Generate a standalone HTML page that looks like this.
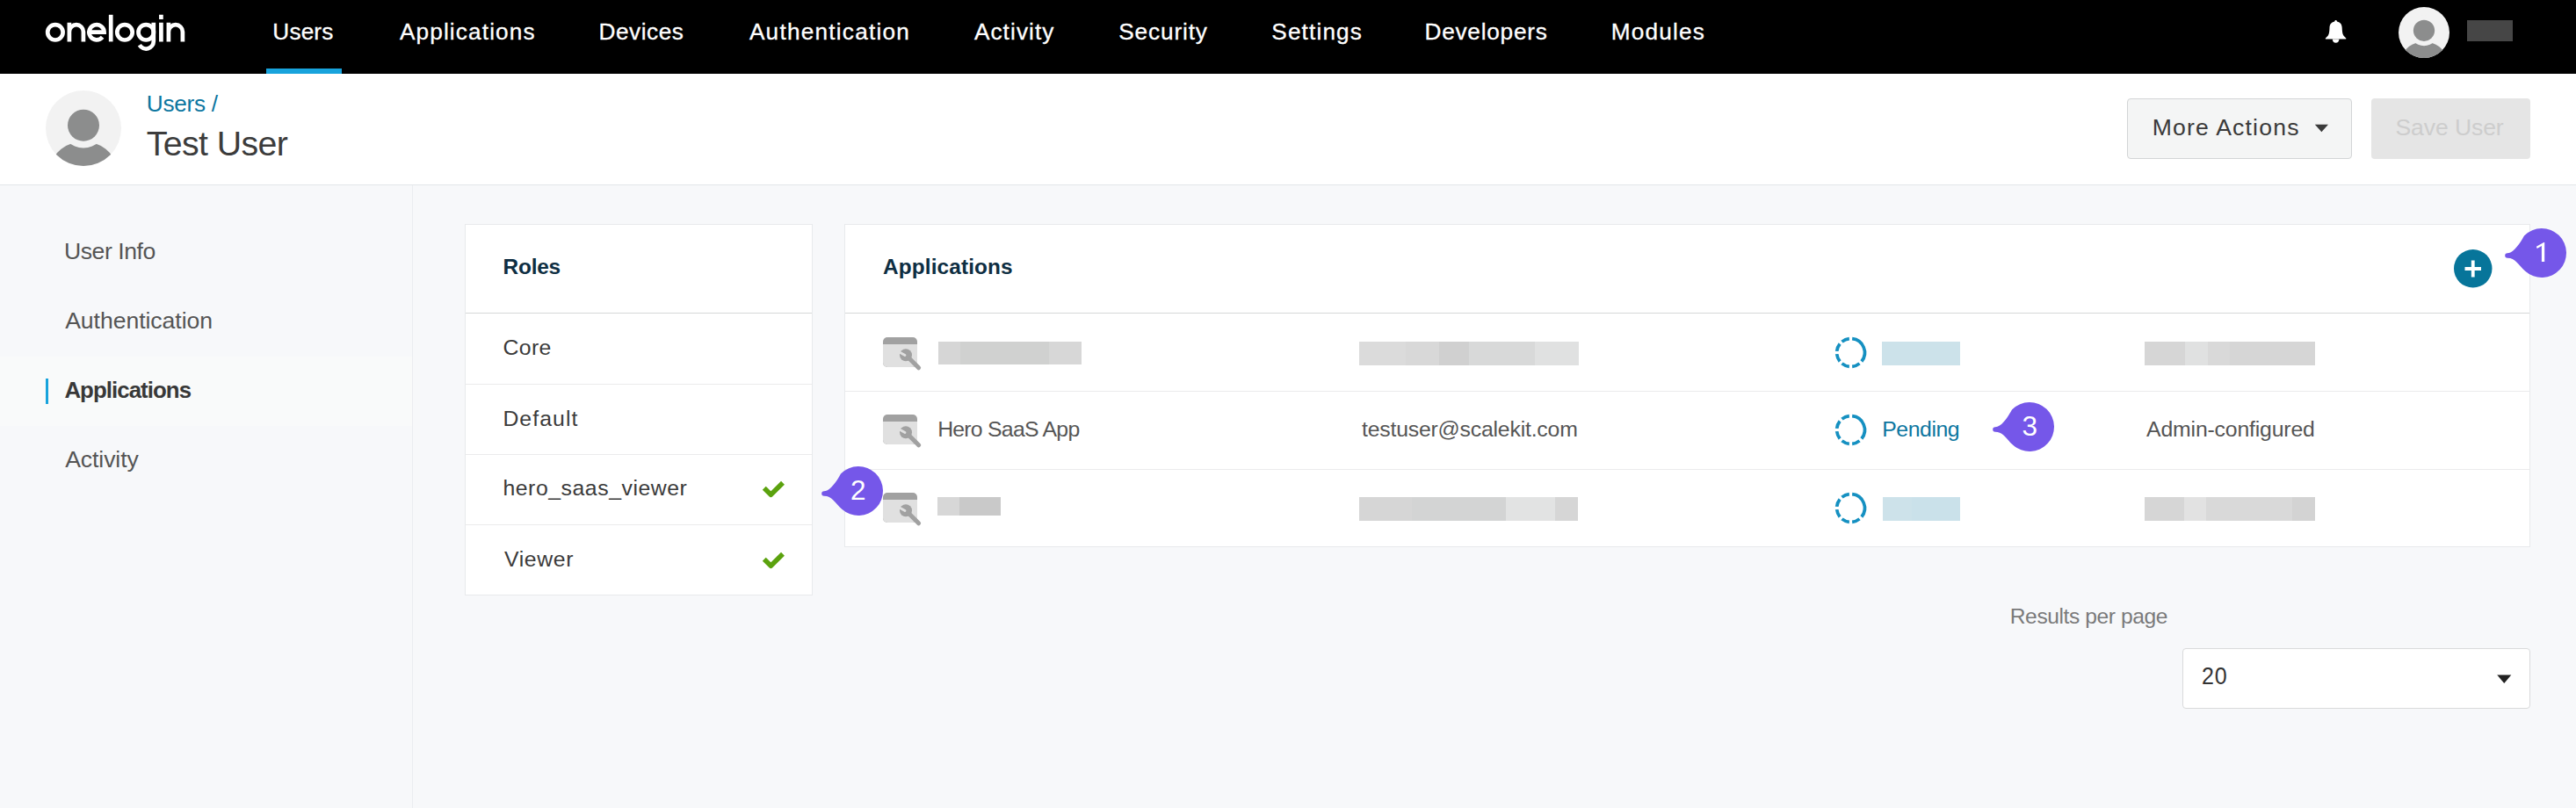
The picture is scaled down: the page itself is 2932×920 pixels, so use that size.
<!DOCTYPE html>
<html><head><meta charset="utf-8"><title>OneLogin - Test User</title>
<style>
html,body{margin:0;padding:0}
body{width:2932px;height:920px;position:relative;overflow:hidden;background:#f7f8fa;font-family:"Liberation Sans",sans-serif}
.a{position:absolute}
.t{position:absolute;line-height:0;white-space:nowrap}
.nav{-webkit-text-stroke:0.3px #fff}
</style></head>
<body>

<div class="a" id="topnav" style="left:0;top:0;width:2932px;height:84px;background:#000"></div>
<svg class="a" style="left:0;top:0" width="230" height="84" viewBox="0 0 230 84">
<g fill="none" stroke="#fff" stroke-width="4.7">
<circle cx="62.9" cy="36.8" r="8.7"/>
<path d="M78.9 47.4V25.8M78.9 36.2A8 8 0 0 1 94.9 36.2V47.4"/>
<path d="M101.4 36.7H118.6A8.6 8.6 0 1 0 116.6 42.3"/>
<path d="M126.2 16.8V47.4"/>
<circle cx="142" cy="36.8" r="8.7"/>
<circle cx="166.2" cy="36.8" r="8.7"/>
<path d="M174.8 25.8V47A8.6 8.6 0 0 1 158.8 51.3"/>
<path d="M183.4 25.8V47.4M183.4 16.8V21.9"/>
<path d="M191.9 47.4V25.8M191.9 36.2A8 8 0 0 1 207.9 36.2V47.4"/>
</g></svg>
<div class="t nav" id="nav1" style="left:310.32px;top:35.92px;font-size:26.20px;letter-spacing:0.160px;color:#fff">Users</div>
<div class="t nav" id="nav2" style="left:454.90px;top:35.92px;font-size:26.20px;letter-spacing:1.135px;color:#fff">Applications</div>
<div class="t nav" id="nav3" style="left:681.50px;top:35.92px;font-size:26.20px;letter-spacing:0.533px;color:#fff">Devices</div>
<div class="t nav" id="nav4" style="left:852.90px;top:35.92px;font-size:26.20px;letter-spacing:1.231px;color:#fff">Authentication</div>
<div class="t nav" id="nav5" style="left:1108.90px;top:35.92px;font-size:26.20px;letter-spacing:1.086px;color:#fff">Activity</div>
<div class="t nav" id="nav6" style="left:1273.30px;top:35.92px;font-size:26.20px;letter-spacing:0.857px;color:#fff">Security</div>
<div class="t nav" id="nav7" style="left:1447.30px;top:35.92px;font-size:26.20px;letter-spacing:1.143px;color:#fff">Settings</div>
<div class="t nav" id="nav8" style="left:1621.50px;top:35.92px;font-size:26.20px;letter-spacing:0.764px;color:#fff">Developers</div>
<div class="t nav" id="nav9" style="left:1833.76px;top:35.92px;font-size:26.20px;letter-spacing:1.173px;color:#fff">Modules</div>
<div class="a" style="left:303px;top:78px;width:86px;height:6px;background:#18a3dc"></div>
<svg class="a" style="left:2640px;top:18px" width="36" height="36" viewBox="0 0 36 36">
<path d="M18.6 5C19.5 5 19.9 5.7 20 6.4C24 7.2 25.6 10 25.7 13.6C25.8 17 26 20.5 27.4 22.6C28.2 23.9 29.4 24.6 30.2 25.4C30.6 25.8 30.4 26.6 29.6 26.6H7.6C6.8 26.6 6.6 25.8 7 25.4C7.8 24.6 9 23.9 9.8 22.6C11.2 20.5 11.4 17 11.5 13.6C11.6 10 13.2 7.2 17.2 6.4C17.3 5.7 17.7 5 18.6 5Z" fill="#fff"/>
<path d="M14.8 26.4C14.8 29 16.4 30.7 18.6 30.7C20.8 30.7 22.4 29 22.4 26.4Z" fill="#fff"/></svg>
<svg class="a" style="left:2730.0px;top:8.0px" width="58.0" height="58.0" viewBox="52 103.3 86 86"><defs><clipPath id="cp2759"><circle cx="95" cy="146.3" r="43"/></clipPath></defs><circle cx="95" cy="146.3" r="43" fill="#f2f2f2"/><g clip-path="url(#cp2759)"><ellipse cx="95" cy="189.7" rx="36" ry="27.9" fill="#8c8d8d"/><circle cx="95" cy="143" r="25.8" fill="#f2f2f2"/></g><circle cx="95" cy="143" r="18" fill="#8c8d8d"/></svg>
<div class="a" style="left:2808px;top:23px;width:52px;height:24px;background:#464646"></div>
<div class="a" style="left:0;top:84px;width:2932px;height:126px;background:#fff;border-bottom:1px solid #e3e6e9"></div>
<svg class="a" style="left:52.0px;top:103.3px" width="86.0" height="86.0" viewBox="52 103.3 86 86"><defs><clipPath id="cp95"><circle cx="95" cy="146.3" r="43"/></clipPath></defs><circle cx="95" cy="146.3" r="43" fill="#f2f2f2"/><g clip-path="url(#cp95)"><ellipse cx="95" cy="189.7" rx="36" ry="27.9" fill="#8c8d8d"/><circle cx="95" cy="143" r="25.8" fill="#f2f2f2"/></g><circle cx="95" cy="143" r="18" fill="#8c8d8d"/></svg>
<div class="t " id="crumb" style="left:166.86px;top:118.02px;font-size:26.20px;letter-spacing:-0.280px;color:#0c76a0">Users /</div>
<div class="t " id="title" style="left:166.84px;top:163.28px;font-size:39.30px;letter-spacing:-0.620px;color:#3c3c3c">Test User</div>
<div class="a" style="left:2421px;top:112px;width:254px;height:67px;background:#f4f5f5;border:1px solid #d3d5d6;border-radius:4px"></div>
<div class="t " id="more" style="left:2449.78px;top:144.78px;font-size:26.60px;letter-spacing:1.178px;color:#3a3a3a">More Actions</div>
<svg class="a" style="left:2634px;top:141px" width="17" height="10" viewBox="0 0 17 10"><path d="M0.8 0.8H16L8.4 9.2Z" fill="#3a3a3a"/></svg>
<div class="a" style="left:2699px;top:112px;width:181px;height:69px;background:#e5e5e5;border-radius:4px"></div>
<div class="t " id="save" style="left:2726.50px;top:144.78px;font-size:26.60px;letter-spacing:-0.120px;color:#cdcdcd">Save User</div>
<div class="a" style="left:469px;top:211px;width:1px;height:709px;background:#ebedf0"></div>
<div class="a" style="left:0;top:406px;width:469px;height:79px;background:#f9fafa"></div>
<div class="a" style="left:52px;top:431px;width:3px;height:29px;background:#18a3dc"></div>
<div class="t " id="s1" style="left:73.04px;top:285.68px;font-size:26.60px;letter-spacing:-0.470px;color:#555555">User Info</div>
<div class="t " id="s2" style="left:74.18px;top:364.68px;font-size:26.60px;letter-spacing:-0.055px;color:#555555">Authentication</div>
<div class="t " id="s3" style="left:73.38px;top:443.76px;font-size:25.80px;letter-spacing:-0.924px;color:#383838;font-weight:bold">Applications</div>
<div class="t " id="s4" style="left:74.18px;top:522.58px;font-size:26.60px;letter-spacing:-0.091px;color:#555555">Activity</div>
<div class="a" style="left:529px;top:255px;width:394px;height:421px;background:#fff;border:1px solid #e8eaec"></div>
<div class="a" style="left:530px;top:356px;width:394px;height:1px;background:#d6d7d8"></div>
<div class="a" style="left:530px;top:437px;width:394px;height:1px;background:#ebebec"></div>
<div class="a" style="left:530px;top:517px;width:394px;height:1px;background:#ebebec"></div>
<div class="a" style="left:530px;top:597px;width:394px;height:1px;background:#ebebec"></div>
<div class="t " id="rh" style="left:572.58px;top:304.45px;font-size:24.40px;letter-spacing:-0.220px;color:#0e2e42;font-weight:bold">Roles</div>
<div class="t " id="r1" style="left:572.58px;top:396.01px;font-size:24.80px;letter-spacing:0.320px;color:#3b3b3b">Core</div>
<div class="t " id="r2" style="left:572.40px;top:476.51px;font-size:24.80px;letter-spacing:1.067px;color:#3b3b3b">Default</div>
<div class="t " id="r3" style="left:572.40px;top:555.81px;font-size:24.80px;letter-spacing:0.549px;color:#3b3b3b">hero_saas_viewer</div>
<div class="t " id="r4" style="left:574.00px;top:636.91px;font-size:24.80px;letter-spacing:0.608px;color:#3b3b3b">Viewer</div>
<svg class="a" style="left:860px;top:540px" width="40" height="30" viewBox="860 540 40 30"><path d="M869.8 555.7L877.4 563.3L891 549.7" fill="none" stroke="#5ba20e" stroke-width="5.5" stroke-linecap="butt" stroke-linejoin="round"/></svg>
<svg class="a" style="left:860px;top:621px" width="40" height="30" viewBox="860 621 40 30"><path d="M869.8 636.7L877.4 644.3L891 630.7" fill="none" stroke="#5ba20e" stroke-width="5.5" stroke-linecap="butt" stroke-linejoin="round"/></svg>
<div class="a" style="left:961px;top:255px;width:1917px;height:366px;background:#fff;border:1px solid #e8eaec"></div>
<div class="a" style="left:962px;top:356px;width:1917px;height:1px;background:#d6d7d8"></div>
<div class="a" style="left:962px;top:445px;width:1917px;height:1px;background:#ebebec"></div>
<div class="a" style="left:962px;top:534px;width:1917px;height:1px;background:#ebebec"></div>
<div class="t " id="ah" style="left:1005.02px;top:304.45px;font-size:24.40px;letter-spacing:0.116px;color:#0e2e42;font-weight:bold">Applications</div>
<svg class="a" style="left:2793px;top:284px" width="44" height="44" viewBox="0 0 44 44"><circle cx="21.75" cy="21.75" r="21.75" fill="#07759a"/><path d="M12.5 22H31M21.75 12.5V31.5" stroke="#fff" stroke-width="3.8"/></svg>
<svg class="a" style="left:1005px;top:384px" width="46" height="40" viewBox="0 0 46 40"><rect x="0" y="0" width="39" height="34" rx="5" fill="#a1a1a1"/><path d="M0 8H39V29A5 5 0 0 1 34 34H5A5 5 0 0 1 0 29Z" fill="#e0e0e0"/><circle cx="26" cy="20.3" r="7" fill="#a1a1a1"/><path d="M26 20.3L40.6 34.8" stroke="#a1a1a1" stroke-width="5" stroke-linecap="round"/><path d="M19.2 17.2L25 20.5" stroke="#e0e0e0" stroke-width="2.8" stroke-linecap="round"/></svg>
<svg class="a" style="left:2086px;top:380.5px" width="41" height="41" viewBox="2086 380.5 41 41"><path d="M2108.16 385.19A15.90 15.90 0 0 1 2118.86 411.01M2116.51 413.36A15.90 15.90 0 0 1 2108.16 416.81M2104.84 416.81A15.90 15.90 0 0 1 2096.49 413.36M2094.14 411.01A15.90 15.90 0 0 1 2090.69 402.66M2090.69 399.34A15.90 15.90 0 0 1 2094.14 390.99M2096.49 388.64A15.90 15.90 0 0 1 2104.84 385.19" fill="none" stroke="#1590c1" stroke-width="3.7"/></svg>
<svg class="a" style="left:1005px;top:472px" width="46" height="40" viewBox="0 0 46 40"><rect x="0" y="0" width="39" height="34" rx="5" fill="#a1a1a1"/><path d="M0 8H39V29A5 5 0 0 1 34 34H5A5 5 0 0 1 0 29Z" fill="#e0e0e0"/><circle cx="26" cy="20.3" r="7" fill="#a1a1a1"/><path d="M26 20.3L40.6 34.8" stroke="#a1a1a1" stroke-width="5" stroke-linecap="round"/><path d="M19.2 17.2L25 20.5" stroke="#e0e0e0" stroke-width="2.8" stroke-linecap="round"/></svg>
<svg class="a" style="left:2086px;top:469.0px" width="41" height="41" viewBox="2086 469.0 41 41"><path d="M2108.16 473.69A15.90 15.90 0 0 1 2118.86 499.51M2116.51 501.86A15.90 15.90 0 0 1 2108.16 505.31M2104.84 505.31A15.90 15.90 0 0 1 2096.49 501.86M2094.14 499.51A15.90 15.90 0 0 1 2090.69 491.16M2090.69 487.84A15.90 15.90 0 0 1 2094.14 479.49M2096.49 477.14A15.90 15.90 0 0 1 2104.84 473.69" fill="none" stroke="#1590c1" stroke-width="3.7"/></svg>
<svg class="a" style="left:1005px;top:561px" width="46" height="40" viewBox="0 0 46 40"><rect x="0" y="0" width="39" height="34" rx="5" fill="#a1a1a1"/><path d="M0 8H39V29A5 5 0 0 1 34 34H5A5 5 0 0 1 0 29Z" fill="#e0e0e0"/><circle cx="26" cy="20.3" r="7" fill="#a1a1a1"/><path d="M26 20.3L40.6 34.8" stroke="#a1a1a1" stroke-width="5" stroke-linecap="round"/><path d="M19.2 17.2L25 20.5" stroke="#e0e0e0" stroke-width="2.8" stroke-linecap="round"/></svg>
<svg class="a" style="left:2086px;top:557.5px" width="41" height="41" viewBox="2086 557.5 41 41"><path d="M2108.16 562.19A15.90 15.90 0 0 1 2118.86 588.01M2116.51 590.36A15.90 15.90 0 0 1 2108.16 593.81M2104.84 593.81A15.90 15.90 0 0 1 2096.49 590.36M2094.14 588.01A15.90 15.90 0 0 1 2090.69 579.66M2090.69 576.34A15.90 15.90 0 0 1 2094.14 567.99M2096.49 565.64A15.90 15.90 0 0 1 2104.84 562.19" fill="none" stroke="#1590c1" stroke-width="3.7"/></svg>
<div class="a" style="left:1068.0px;top:389.0px;width:24.8px;height:26.0px;background:#d6d6d6"></div><div class="a" style="left:1092.8px;top:389.0px;width:101.4px;height:26.0px;background:#d0d1d0"></div><div class="a" style="left:1194.2px;top:389.0px;width:36.8px;height:26.0px;background:#d7d7d7"></div>
<div class="a" style="left:1547.0px;top:389.0px;width:53.0px;height:27.0px;background:#dbdbdb"></div><div class="a" style="left:1600.0px;top:389.0px;width:38.0px;height:27.0px;background:#d8d8d8"></div><div class="a" style="left:1638.0px;top:389.0px;width:34.0px;height:27.0px;background:#d0d0d0"></div><div class="a" style="left:1672.0px;top:389.0px;width:74.7px;height:27.0px;background:#d8d9d9"></div><div class="a" style="left:1746.7px;top:389.0px;width:50.3px;height:27.0px;background:#e0e1e1"></div>
<div class="a" style="left:2142.0px;top:389.0px;width:89.0px;height:27.0px;background:#cce2ea"></div>
<div class="a" style="left:2441.0px;top:389.0px;width:45.6px;height:27.0px;background:#d6d6d6"></div><div class="a" style="left:2486.6px;top:389.0px;width:26.8px;height:27.0px;background:#e0e1e1"></div><div class="a" style="left:2513.4px;top:389.0px;width:24.6px;height:27.0px;background:#d9d9d9"></div><div class="a" style="left:2538.0px;top:389.0px;width:97.0px;height:27.0px;background:#d6d6d6"></div>
<div class="t " id="a2" style="left:1067.14px;top:488.81px;font-size:24.80px;letter-spacing:-0.740px;color:#555555">Hero SaaS App</div>
<div class="t " id="e2" style="left:1550.00px;top:489.31px;font-size:24.80px;letter-spacing:-0.200px;color:#555555">testuser@scalekit.com</div>
<div class="t " id="p2" style="left:2142.14px;top:489.31px;font-size:24.80px;letter-spacing:-0.413px;color:#0c76a0">Pending</div>
<div class="t " id="c2" style="left:2443.10px;top:488.81px;font-size:24.80px;letter-spacing:-0.176px;color:#555555">Admin-configured</div>
<div class="a" style="left:1067.0px;top:566.0px;width:25.0px;height:21.0px;background:#d7d7d7"></div><div class="a" style="left:1092.0px;top:566.0px;width:47.0px;height:21.0px;background:#c9c9c9"></div>
<div class="a" style="left:1547.0px;top:566.0px;width:59.7px;height:27.0px;background:#d6d6d6"></div><div class="a" style="left:1606.7px;top:566.0px;width:107.3px;height:27.0px;background:#d3d4d4"></div><div class="a" style="left:1714.0px;top:566.0px;width:56.3px;height:27.0px;background:#e2e3e3"></div><div class="a" style="left:1770.3px;top:566.0px;width:25.7px;height:27.0px;background:#d6d6d6"></div>
<div class="a" style="left:2143.0px;top:566.0px;width:32.6px;height:27.0px;background:#cde2ea"></div><div class="a" style="left:2175.6px;top:566.0px;width:55.4px;height:27.0px;background:#cae1ea"></div>
<div class="a" style="left:2441.0px;top:566.0px;width:44.6px;height:27.0px;background:#d6d6d6"></div><div class="a" style="left:2485.6px;top:566.0px;width:25.8px;height:27.0px;background:#e2e2e2"></div><div class="a" style="left:2511.4px;top:566.0px;width:98.0px;height:27.0px;background:#d9d9d9"></div><div class="a" style="left:2609.4px;top:566.0px;width:25.6px;height:27.0px;background:#d3d3d3"></div>
<div class="t " id="rpp" style="left:2287.78px;top:701.88px;font-size:24.60px;letter-spacing:-0.411px;color:#7a7a7a">Results per page</div>
<div class="a" style="left:2484px;top:738px;width:394px;height:67px;background:#fff;border:1px solid #d9dadb;border-radius:4px"></div>
<div class="t " id="sel" style="left:2506.40px;top:770.28px;font-size:27.20px;letter-spacing:1.040px;color:#333333;transform:scaleX(0.920);transform-origin:0 0">20</div>
<svg class="a" style="left:2841px;top:767px" width="19" height="12" viewBox="0 0 19 12"><path d="M1.2 1.5H17.3L9.25 11Z" fill="#222"/></svg>
<svg class="a" style="left:2845.1px;top:255.7px" width="80" height="64" viewBox="-48 -32 80 64"><path d="M-19.8 -19.8A28 28 0 1 1 -18.74 20.81C-26.91 13.45 -30 5.8 -39 5.8A2.8 2.8 0 0 1 -39 0.2C-30 0.2 -20.5 -19.09 -19.8 -19.8Z" fill="#7557e9"/></svg>
<svg class="a" style="left:2880px;top:270px" width="25" height="32" viewBox="2880 270 25 32"><path d="M2896.2 275.9V297.9H2892.9V279.9L2887.7 282.9L2886.9 280.7L2895.3 275.9Z" fill="#fff"/></svg>
<svg class="a" style="left:928.7px;top:526.6px" width="80" height="64" viewBox="-48 -32 80 64"><path d="M-19.8 -19.8A28 28 0 1 1 -18.74 20.81C-26.91 13.45 -30 5.8 -39 5.8A2.8 2.8 0 0 1 -39 0.2C-30 0.2 -20.5 -19.09 -19.8 -19.8Z" fill="#7557e9"/></svg>
<div class="t " id="b2" style="left:968.10px;top:558.09px;font-size:31.50px;letter-spacing:0.000px;color:#ffffff">2</div>
<svg class="a" style="left:2262.0px;top:453.6px" width="80" height="64" viewBox="-48 -32 80 64"><path d="M-19.8 -19.8A28 28 0 1 1 -18.74 20.81C-26.91 13.45 -30 5.8 -39 5.8A2.8 2.8 0 0 1 -39 0.2C-30 0.2 -20.5 -19.09 -19.8 -19.8Z" fill="#7557e9"/></svg>
<div class="t " id="b3" style="left:2301.52px;top:485.29px;font-size:31.50px;letter-spacing:0.000px;color:#ffffff">3</div>
</body></html>
